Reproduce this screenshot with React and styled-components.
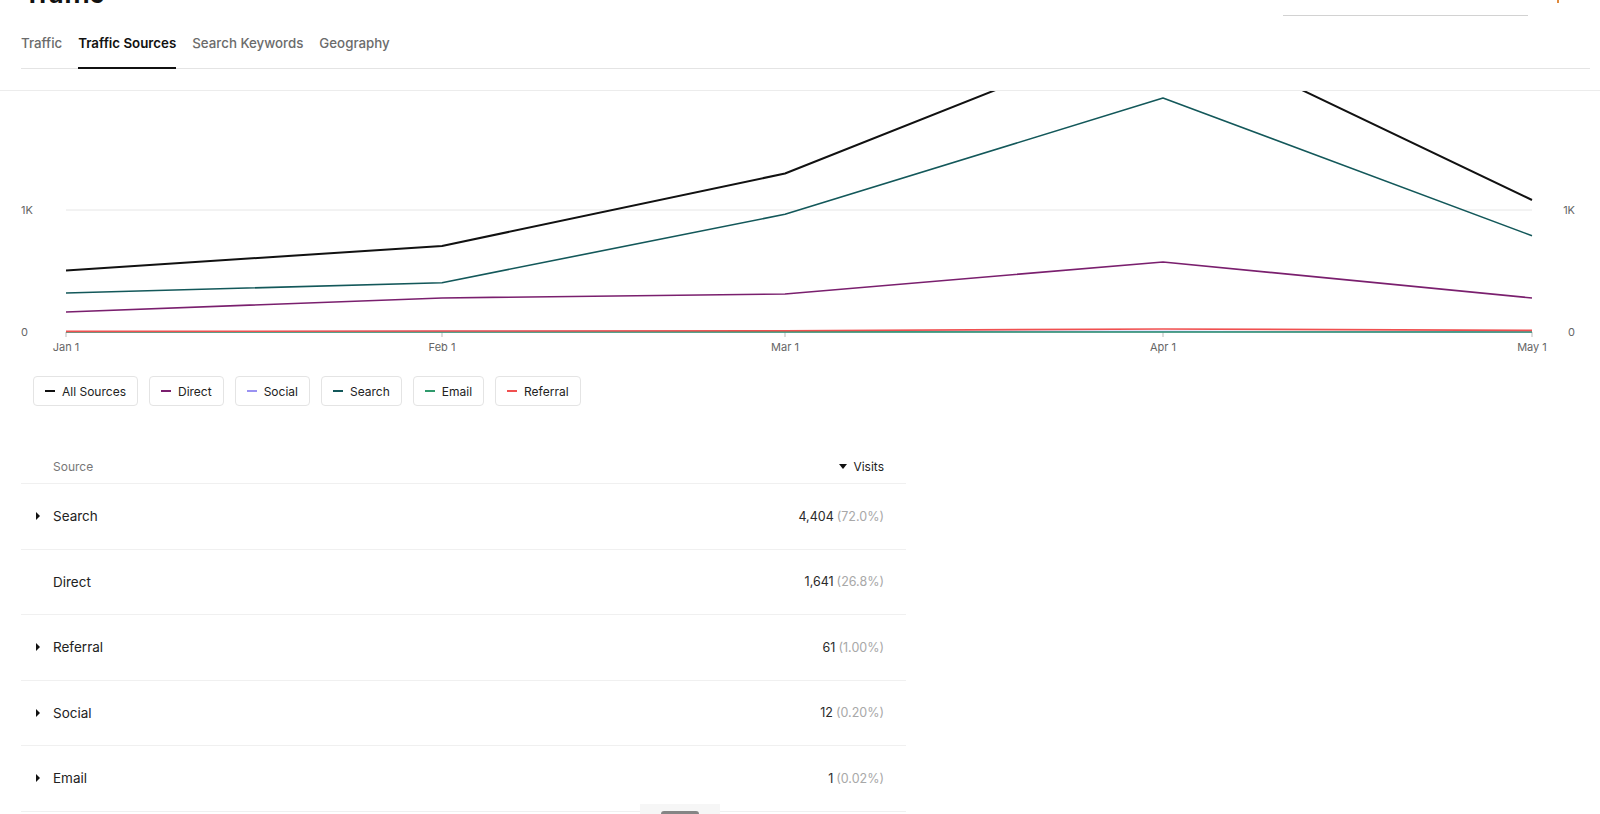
import React from "react";
import styled, { createGlobalStyle } from "styled-components";

const GlobalStyle = createGlobalStyle`
  html, body {
    margin: 0;
    padding: 0;
    overflow: hidden;
    background: #fff;
  }
  body {
    font-family: Inter, "Noto Sans", "Liberation Sans", sans-serif;
    color: #1f1f1f;
  }
`;

const months = [
  { label: "Jan 1", x: 66 },
  { label: "Feb 1", x: 442 },
  { label: "Mar 1", x: 785 },
  { label: "Apr 1", x: 1163 },
  { label: "May 1", x: 1532 },
];

const series = [
  { name: "All Sources", color: "#111111", width: 2, values: [505, 705, 1299, 2528, 1082] },
  { name: "Direct", color: "#7a1f6e", width: 1.6, values: [164, 279, 312, 574, 279] },
  { name: "Social", color: "#9a92f2", width: 1.6, values: [2, 3, 3, 3, 1] },
  { name: "Search", color: "#13585a", width: 1.6, values: [320, 404, 965, 1918, 789] },
  { name: "Email", color: "#2f9a6c", width: 1.6, values: [0, 0, 1, 0, 0] },
  { name: "Referral", color: "#f05050", width: 1.6, values: [5, 8, 10, 25, 13] },
];

const rows = [
  { name: "Search", visits: "4,404", share: "(72.0%)", expandable: true },
  { name: "Direct", visits: "1,641", share: "(26.8%)", expandable: false },
  { name: "Referral", visits: "61", share: "(1.00%)", expandable: true },
  { name: "Social", visits: "12", share: "(0.20%)", expandable: true },
  { name: "Email", visits: "1", share: "(0.02%)", expandable: true },
];

const ZERO = 241;
const PER_K = 122;
const yOf = (v) => ZERO - (v / 1000) * PER_K;

function Chart() {
  return (
    <ChartWrap>
      <svg width="1600" height="270" viewBox="0 0 1600 270">
        <line x1="66" x2="1532" y1={yOf(1000)} y2={yOf(1000)} stroke="#e6e6e6" strokeWidth="1" />
        <line x1="66" x2="1532" y1={ZERO} y2={ZERO} stroke="#e6e6e6" strokeWidth="1" />
        {months.map((m) => (
          <g key={m.label}>
            <line x1={m.x} x2={m.x} y1={ZERO} y2={ZERO + 5} stroke="#bbb" strokeWidth="1" />
            <text x={m.x} y={ZERO + 19} textAnchor="middle" fontSize="11" fill="#666" fontFamily="Inter, sans-serif">
              {m.label}
            </text>
          </g>
        ))}
        <text x="21" y={yOf(1000) + 4} fontSize="11" fill="#666" fontFamily="Inter, sans-serif">1K</text>
        <text x="21" y={ZERO + 4} fontSize="11" fill="#666" fontFamily="Inter, sans-serif">0</text>
        <text x="1575" y={yOf(1000) + 4} textAnchor="end" fontSize="11" fill="#666" fontFamily="Inter, sans-serif">1K</text>
        <text x="1575" y={ZERO + 4} textAnchor="end" fontSize="11" fill="#666" fontFamily="Inter, sans-serif">0</text>
        {series.map((s) => (
          <polyline
            key={s.name}
            fill="none"
            stroke={s.color}
            strokeWidth={s.width}
            strokeLinejoin="round"
            points={s.values.map((v, i) => `${months[i].x},${yOf(v)}`).join(" ")}
          />
        ))}
      </svg>
    </ChartWrap>
  );
}

function App() {
  return (
    <>
      <GlobalStyle />
      <Header>
        <HeaderInner>
          <TitleRow>
            <Title>Traffic</Title>
            <Tools>
              <SearchField />
              <IconSpot />
            </Tools>
          </TitleRow>
          <TabBar>
            <Tab>Traffic</Tab>
            <Tab active>Traffic Sources</Tab>
            <Tab>Search Keywords</Tab>
            <Tab>Geography</Tab>
          </TabBar>
        </HeaderInner>
      </Header>

      <Chart />

      <Legend>
        {series.map((s) => (
          <Chip key={s.name}>
            <Swatch color={s.color} />
            {s.name}
          </Chip>
        ))}
      </Legend>

      <Table>
        <HeadRow>
          <HeadCell>Source</HeadCell>
          <HeadCell sorted>
            <CaretDown />
            Visits
          </HeadCell>
        </HeadRow>
        {rows.map((r) => (
          <Row key={r.name}>
            <SourceCell>
              <CaretSlot>{r.expandable && <CaretRight />}</CaretSlot>
              {r.name}
            </SourceCell>
            <VisitsCell>
              <Count>{r.visits}</Count>
              <Share>{r.share}</Share>
            </VisitsCell>
          </Row>
        ))}
      </Table>

      <Handle>
        <Grip />
      </Handle>
    </>
  );
}

const Header = styled.header`
  border-bottom: 1px solid #ececec;
  padding-bottom: 21px;
  background: #fff;
`;

const HeaderInner = styled.div`
  padding: 0 10px 0 21px;
`;

const TitleRow = styled.div`
  display: flex;
  justify-content: space-between;
  align-items: flex-end;
  margin-top: -24px;
  height: 40px;
`;

const Title = styled.h1`
  margin: 6px 0 0 3px;
  align-self: flex-start;
  font-size: 25px;
  line-height: 25px;
  font-weight: 700;
  color: #111;
`;

const Tools = styled.div`
  display: flex;
  align-items: flex-end;
  gap: 25px;
  margin-right: 25px;
`;

const SearchField = styled.div`
  width: 245px;
  height: 28px;
  border-bottom: 1px solid #d2d2d2;
`;

const IconSpot = styled.div`
  width: 12px;
  height: 40px;
  position: relative;
  &::after {
    content: "";
    position: absolute;
    top: 24px;
    left: 4px;
    width: 2px;
    height: 3px;
    background: #e08a3c;
  }
`;

const TabBar = styled.nav`
  display: flex;
  gap: 16px;
  margin-top: 17px;
  border-bottom: 1px solid #e4e4e4;
`;

const Tab = styled.div`
  font-size: 13.3px;
  line-height: 20px;
  padding-bottom: 14px;
  border-bottom: 2px solid ${(p) => (p.active ? "#111" : "transparent")};
  margin-bottom: -1px;
  color: ${(p) => (p.active ? "#111" : "#6b6b6b")};
  font-weight: ${(p) => (p.active ? 600 : 500)};
  white-space: nowrap;
`;

const ChartWrap = styled.div`
  height: 270px;
  overflow: hidden;
  svg {
    display: block;
  }
`;

const Legend = styled.div`
  display: flex;
  gap: 11px;
  margin-top: 15px;
  padding-left: 33px;
`;

const Chip = styled.div`
  display: flex;
  align-items: center;
  gap: 7px;
  height: 28px;
  padding: 0 11px;
  border: 1px solid #e4e4e4;
  border-radius: 4px;
  font-size: 12px;
  color: #222;
`;

const Swatch = styled.span`
  width: 10px;
  height: 2px;
  background: ${(p) => p.color};
`;

const Table = styled.div`
  width: 885px;
  margin: 43px 0 0 21px;
`;

const HeadRow = styled.div`
  display: flex;
  justify-content: space-between;
  align-items: center;
  height: 34px;
  padding: 0 22px 0 32px;
  border-bottom: 1px solid #f0f0f0;
`;

const HeadCell = styled.div`
  display: flex;
  align-items: center;
  gap: 6px;
  font-size: 12px;
  color: ${(p) => (p.sorted ? "#222" : "#777")};
`;

const CaretDown = styled.span`
  width: 0;
  height: 0;
  border-left: 4px solid transparent;
  border-right: 4px solid transparent;
  border-top: 5px solid #111;
`;

const Row = styled.div`
  display: flex;
  justify-content: space-between;
  align-items: center;
  height: 64.5px;
  padding: 0 22px 0 15px;
  border-bottom: 1px solid #f0f0f0;
`;

const SourceCell = styled.div`
  display: flex;
  align-items: center;
  font-size: 13.5px;
  color: #222;
`;

const CaretSlot = styled.span`
  display: flex;
  align-items: center;
  width: 17px;
`;

const CaretRight = styled.span`
  width: 0;
  height: 0;
  border-top: 4px solid transparent;
  border-bottom: 4px solid transparent;
  border-left: 4px solid #111;
`;

const VisitsCell = styled.div`
  display: flex;
  gap: 3px;
  font-size: 12.5px;
`;

const Count = styled.span`
  color: #2a2a2a;
  font-weight: 400;
`;

const Share = styled.span`
  color: #a8a8a8;
`;

const Handle = styled.div`
  position: fixed;
  left: 640px;
  bottom: 0;
  width: 80px;
  height: 10px;
  background: #f6f6f6;
  display: flex;
  justify-content: center;
`;

const Grip = styled.div`
  margin-top: 7px;
  width: 38px;
  height: 8px;
  border-radius: 3px;
  background: #858585;
`;

export default App;
